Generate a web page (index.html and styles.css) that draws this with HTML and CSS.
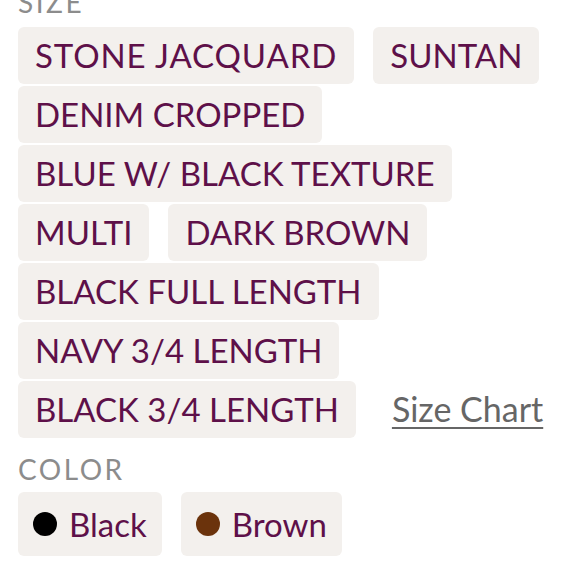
FILE: index.html
```html
<!DOCTYPE html>
<html>
<head>
<meta charset="utf-8">
<link rel="stylesheet" href="styles.css">
</head>
<body>
<div class="panel">
  <div class="label label-size">SIZE</div>
  <div class="chips">
    <span class="chip chip-wide">STONE JACQUARD</span>
    <span class="chip">SUNTAN</span>
    <span class="chip">DENIM CROPPED</span>
    <span class="chip">BLUE W/ BLACK TEXTURE</span>
    <span class="chip">MULTI</span>
    <span class="chip">DARK BROWN</span>
    <span class="chip">BLACK FULL LENGTH</span>
    <span class="chip">NAVY 3/4 LENGTH</span>
    <span class="chip">BLACK 3/4 LENGTH</span>
    <a class="size-chart" href="#">Size Chart</a>
  </div>
  <div class="label label-color">COLOR</div>
  <div class="colors">
    <span class="color-chip"><span class="dot dot-black"></span>Black</span>
    <span class="color-chip"><span class="dot dot-brown"></span>Brown</span>
  </div>
</div>
</body>
</html>
```
FILE: styles.css
```css
html, body {
  margin: 0;
  padding: 0;
  background: #ffffff;
}
body {
  font-family: Lato, "Liberation Sans", sans-serif;
  width: 580px;
  height: 580px;
  overflow: hidden;
}
.panel {
  padding-left: 18px;
}
.label {
  color: #8c8c8c;
  font-size: 28px;
  line-height: 28px;
  letter-spacing: 2.5px;
}
.label-size {
  margin-top: -12px;
  margin-bottom: 11px;
}
.chips {
  display: flex;
  flex-wrap: wrap;
  row-gap: 2px;
  column-gap: 19px;
  width: 540px;
  align-items: baseline;
}
.chip {
  display: inline-block;
  background: #f3f0ed;
  color: #5e1049;
  font-size: 33px;
  height: 57px;
  line-height: 57px;
  padding: 0 17px;
  border-radius: 6px;
  white-space: nowrap;
}
.chip-wide {
  letter-spacing: 0.9px;
}
.size-chart {
  color: #666666;
  font-size: 34px;
  margin-left: 17px;
  text-decoration: underline;
  text-decoration-thickness: 2px;
  text-underline-offset: 5px;
}
.label-color {
  margin-top: 17px;
  margin-bottom: 9px;
}
.colors {
  display: flex;
  column-gap: 19px;
}
.color-chip {
  display: inline-flex;
  align-items: center;
  background: #f3f0ed;
  color: #5e1049;
  font-size: 33px;
  height: 64px;
  padding: 0 15px;
  border-radius: 6px;
}
.dot {
  width: 24px;
  height: 24px;
  border-radius: 50%;
  margin-right: 12px;
}
.dot-black { background: #000000; }
.dot-brown { background: #6b330c; }
```
